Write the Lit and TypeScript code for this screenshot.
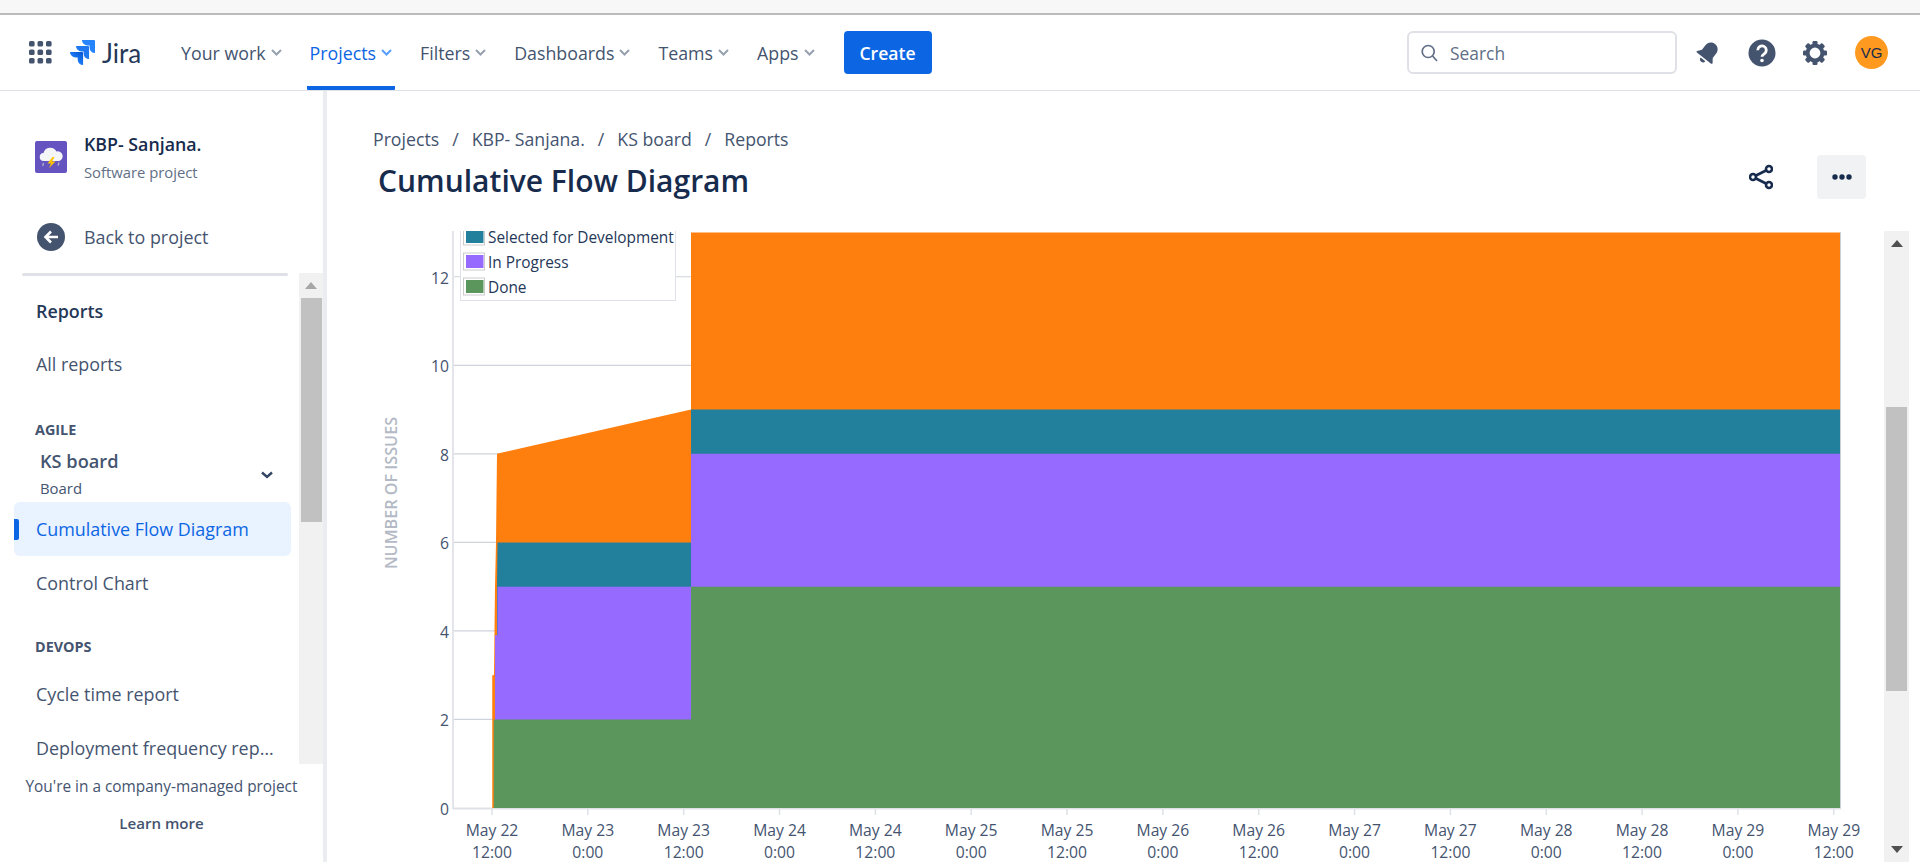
import { LitElement, html, css, svg } from 'lit';
import { customElement } from 'lit/decorators.js';

const NAV_ITEMS = ['Your work', 'Projects', 'Filters', 'Dashboards', 'Teams', 'Apps'];

const X_LABELS = [
  ['May 22', '12:00'], ['May 23', '0:00'], ['May 23', '12:00'], ['May 24', '0:00'],
  ['May 24', '12:00'], ['May 25', '0:00'], ['May 25', '12:00'], ['May 26', '0:00'],
  ['May 26', '12:00'], ['May 27', '0:00'], ['May 27', '12:00'], ['May 28', '0:00'],
  ['May 28', '12:00'], ['May 29', '0:00'], ['May 29', '12:00'],
];

// chart scale, in page pixels (the svg viewBox is page coordinates)
const Y0 = 808;
const UNIT = 44.27;
const y = (v: number) => Y0 - v * UNIT;
const tickX = (i: number) => 492 + 95.84 * i;

const pts = (list: number[][]) => list.map(([a, b]) => `${a},${y(b)}`).join(' ');

const chevron = html`<svg class="chev" width="11" height="7" viewBox="0 0 11 7"><path d="M1 1l4.5 4.5L10 1" fill="none" stroke="currentColor" stroke-width="2"/></svg>`;

@customElement('top-nav')
class TopNav extends LitElement {
  static styles = css`
    :host {
      display: flex;
      align-items: center;
      height: 75px;
      border-bottom: 1px solid #dfe1e6;
      padding-left: 29px;
      padding-right: 32px;
      color: #44546f;
    }
    .grid { display: block; margin-right: 18px; }
    .logo { display: block; margin-right: 7px; }
    .brand {
      font-family: 'Lato', sans-serif;
      font-size: 26px;
      color: #253858;
      width: 40px;
      margin-right: 36px;
    }
    .items { display: flex; height: 100%; gap: 22px; }
    .item {
      display: flex;
      align-items: center;
      gap: 5px;
      padding: 6px 3px 2px;
      font-size: 17.8px;
      font-weight: 500;
      box-sizing: border-box;
      border-bottom: 4px solid transparent;
      border-radius: 0 0 1px 1px;
    }
    .item .chev { color: #97a0af; }
    .item.active { color: #0c66e4; border-bottom-color: #0c66e4; }
    .item.active .chev { color: #579dff; }
    .create {
      margin-left: 26px;
      width: 88px;
      height: 43px;
      background: #0c66e4;
      color: #fff;
      border-radius: 4px;
      font-size: 17.6px;
      font-weight: 600;
      display: flex;
      align-items: center;
      justify-content: center;
    }
    .spacer { flex: 1; }
    .search {
      box-sizing: border-box;
      width: 270px;
      height: 43px;
      border: 2px solid #dfe1e6;
      border-radius: 6px;
      display: flex;
      align-items: center;
      gap: 12px;
      padding-left: 12px;
      color: #626f86;
      font-size: 17.4px;
    }
    .icons { display: flex; align-items: center; margin-left: 18px; }
    .icons svg { display: block; }
    .bell { margin-right: 27px; }
    .help { margin-right: 27px; }
    .gear { margin-right: 28px; }
    .avatar {
      width: 33px;
      height: 33px;
      border-radius: 50%;
      background: #ff991f;
      color: #172b4d;
      font-family: 'Liberation Sans', sans-serif;
      font-size: 15px;
      display: flex;
      align-items: center;
      justify-content: center;
    }
  `;

  render() {
    return html`
      <svg class="grid" width="23" height="23" viewBox="0 0 23 23" fill="#44546f">
        ${[0, 8.5, 17].map((b) => [0, 8.5, 17].map((a) => svg`<rect x=${a} y=${b} width="5.6" height="5.6" rx="1.6"/>`))}
      </svg>
      <svg class="logo" width="25" height="25" viewBox="0 0 24 24">
        <defs>
          <linearGradient id="jg" x1="1" y1="0" x2="0.35" y2="0.75">
            <stop offset="0" stop-color="#0052cc"/><stop offset="1" stop-color="#2684ff"/>
          </linearGradient>
        </defs>
        <path fill="#2684ff" d="M23.013 0H11.455a5.215 5.215 0 0 0 5.215 5.215h2.129v2.057A5.215 5.215 0 0 0 24 12.483V1.005A1.001 1.001 0 0 0 23.013 0Z"/>
        <path fill="#1f78f0" d="M17.294 5.757H5.736a5.215 5.215 0 0 0 5.215 5.214h2.129v2.058a5.218 5.218 0 0 0 5.215 5.214V6.758a1.001 1.001 0 0 0-1.001-1.001z"/>
        <path fill="url(#jg)" d="M11.571 11.513H0a5.218 5.218 0 0 0 5.232 5.215h2.13v2.057A5.215 5.215 0 0 0 12.575 24V12.518a1.005 1.005 0 0 0-1.005-1.005z"/>
      </svg>
      <div class="brand">Jira</div>
      <div class="items">
        ${NAV_ITEMS.map((n) => html`<div class="item ${n === 'Projects' ? 'active' : ''}">${n}${chevron}</div>`)}
      </div>
      <div class="create">Create</div>
      <div class="spacer"></div>
      <div class="search">
        <svg width="17" height="18" viewBox="0 0 17 18" fill="none" stroke="#626f86" stroke-width="1.7">
          <circle cx="7.2" cy="7.5" r="6"/><path d="M11.6 12l4.4 5"/>
        </svg>
        Search
      </div>
      <div class="icons">
        <svg class="bell" width="26" height="26" viewBox="0 0 24 24" fill="#44546f">
          <g transform="rotate(38 12 12)">
            <path d="M12 1.5c-4 0-6.3 3-6.3 6.6V13L3 16.6c-.4.6 0 1.4.7 1.4h16.6c.7 0 1.1-.8.7-1.4L18.3 13V8.1C18.300 4.500 16 1.500 12 1.500z"/>
            <path d="M9.300 19.500h5.400a2.700 2.700 0 0 1-5.400 0z"/>
          </g>
        </svg>
        <svg class="help" width="28" height="28" viewBox="0 0 28 28">
          <circle cx="14" cy="14" r="13.500" fill="#44546f"/>
          <path d="M9.700 11.200a4.300 4.300 0 1 1 6.600 3.600c-1.500 1-2.300 1.500-2.300 3" fill="none" stroke="#fff" stroke-width="2.800"/>
          <circle cx="14" cy="21.500" r="1.800" fill="#fff"/>
        </svg>
        <svg class="gear" width="24" height="24" viewBox="0 0 24 24" fill="#44546f">
          ${[0, 45, 90, 135, 180, 225, 270, 315].map((a) => svg`<rect x="9.500" y="0" width="5" height="5" rx="1.200" transform="rotate(${a} 12 12)"/>`)}
          <circle cx="12" cy="12" r="7.400" fill="none" stroke="#44546f" stroke-width="4"/>
        </svg>
        <div class="avatar">VG</div>
      </div>
    `;
  }
}

@customElement('side-nav')
class SideNav extends LitElement {
  static styles = css`
    :host {
      display: flex;
      flex-direction: column;
      flex: none;
      width: 323px;
      border-right: 4px solid #ebecf0;
      color: #44546f;
      font-size: 17.9px;
    }
    .project {
      display: flex;
      align-items: center;
      gap: 17px;
      height: 66px;
      margin-top: 33px;
      padding-left: 35px;
    }
    .project svg { display: block; flex: none; }
    .pname { font-size: 17.8px; font-weight: 600; color: #172b4d; line-height: 26px; margin-top: 1px; }
    .ptype { font-size: 14.8px; color: #626f86; line-height: 26px; margin-top: 2px; }
    .back {
      display: flex;
      align-items: center;
      gap: 19px;
      height: 48px;
      margin-top: 23px;
      margin-bottom: 1px;
      padding-left: 37px;
    }
    .back svg { display: block; }
    .sep {
      height: 3px;
      background: #dfe1e6;
      margin: 11px 35px 0 22px;
      border-radius: 2px;
    }
    .scroll {
      display: flex;
      height: 491px;
      margin-top: -3px;
      overflow: hidden;
    }
    .list { flex: 1; min-width: 0; padding-top: 14px; }
    .heading {
      height: 48px;
      display: flex;
      align-items: center;
      padding-left: 36px;
      font-weight: 600;
      color: #253858;
    }
    .row {
      position: relative;
      height: 54px;
      margin: 0 8px 0 14px;
      padding: 0 17px 0 22px;
      display: flex;
      align-items: center;
      border-radius: 6px;
      white-space: nowrap;
      overflow: hidden;
    }
    .row span { overflow: hidden; text-overflow: ellipsis; }
    .row.first { margin-top: 2px; }
    .row.active { background: #e9f2ff; color: #0c66e4; margin-top: 0; }
    .row.active::before {
      content: '';
      position: absolute;
      left: 0;
      top: 17px;
      width: 5px;
      height: 21px;
      background: #0c66e4;
      border-radius: 0 2px 2px 0;
    }
    .group {
      height: 22px;
      display: flex;
      align-items: center;
      padding-left: 35px;
      font-size: 14.4px;
      font-weight: 700;
      color: #44546f;
    }
    .group.agile { margin-top: 27px; }
    .group.devops { margin-top: 25px; margin-bottom: 10px; }
    .board {
      height: 56px;
      margin-top: 6px;
      padding: 0 26px 0 40px;
      display: flex;
      align-items: center;
      justify-content: space-between;
      box-sizing: border-box;
    }
    .board svg { margin-top: 2px; }
    .bname { font-weight: 600; font-size: 18.2px; line-height: 27px; margin-top: 1px; }
    .btype { font-size: 14.9px; line-height: 27px; }
    .bar {
      flex: none;
      width: 24px;
      background: #f1f1f1;
      display: flex;
      flex-direction: column;
      align-items: center;
    }
    .arrow { height: 25px; display: flex; align-items: center; justify-content: center; }
    .thumb { width: 21px; height: 224px; background: #c1c1c1; }
    .foot { text-align: center; padding-top: 12px; }
    .foot .note { font-size: 15.4px; line-height: 22px; color: #44546f; white-space: nowrap; }
    .foot .more { font-size: 15.1px; font-weight: 600; line-height: 22px; margin-top: 14px; color: #44546f; }
  `;

  render() {
    return html`
      <div class="project">
        <svg width="32" height="32" viewBox="0 0 32 32">
          <rect width="32" height="32" rx="2" fill="#6554c0"/>
          <path d="M9 20a4 4 0 0 1-.5-8A7 7 0 0 1 21.500 10.500 4.800 4.800 0 0 1 24 20z" fill="#f4f5f7"/>
          <path d="M17.500 16l-5 6.500h3.500l-2 4.500 6.500-6.500h-3.500l2.500-4.500z" fill="#ffc400"/>
          <path d="M8.500 22l-.8 3M24 21.500l-.8 3" stroke="#b3bac5" stroke-width="1.200"/>
        </svg>
        <div>
          <div class="pname">KBP- Sanjana.</div>
          <div class="ptype">Software project</div>
        </div>
      </div>
      <div class="back">
        <svg width="28" height="28" viewBox="0 0 28 28">
          <circle cx="14" cy="14" r="14" fill="#44546f"/>
          <path d="M21 14H9M14 8.500L8.500 14l5.500 5.500" fill="none" stroke="#fff" stroke-width="2.600"/>
        </svg>
        Back to project
      </div>
      <div class="sep"></div>
      <div class="scroll">
        <div class="list">
          <div class="heading">Reports</div>
          <div class="row first"><span>All reports</span></div>
          <div class="group agile">AGILE</div>
          <div class="board">
            <div>
              <div class="bname">KS board</div>
              <div class="btype">Board</div>
            </div>
            <svg width="12" height="8" viewBox="0 0 12 8"><path d="M1 1.500l5 4.500 5-4.500" fill="none" stroke="#344563" stroke-width="2.400"/></svg>
          </div>
          <div class="row active"><span>Cumulative Flow Diagram</span></div>
          <div class="row"><span>Control Chart</span></div>
          <div class="group devops">DEVOPS</div>
          <div class="row"><span>Cycle time report</span></div>
          <div class="row"><span>Deployment frequency report</span></div>
        </div>
        <div class="bar">
          <div class="arrow"><svg width="12" height="7" viewBox="0 0 12 7"><path d="M6 0l6 7H0z" fill="#a6a6a6"/></svg></div>
          <div class="thumb"></div>
        </div>
      </div>
      <div class="foot">
        <div class="note">You're in a company-managed project</div>
        <div class="more">Learn more</div>
      </div>
    `;
  }
}

@customElement('flow-chart')
class FlowChart extends LitElement {
  static styles = css`
    :host { display: block; flex: none; width: 1557px; height: 631px; overflow: hidden; }
    svg { display: block; }
    .lab { font-size: 15.7px; fill: #44546f; }
    .ylab { font-size: 15.7px; fill: #44546f; }
    .title { font-size: 16.2px; font-weight: 600; fill: #b3bac5; }
    .leg { font-size: 15.4px; fill: #253858; }
  `;

  render() {
    const gridV = [2, 4, 6, 8, 10, 12];
    const legend = [
      { name: 'Selected for Development', fill: '#23809c', top: 226, h: 18 },
      { name: 'In Progress', fill: '#9669ff', top: 253, h: 16 },
      { name: 'Done', fill: '#5b965d', top: 278, h: 16 },
    ];
    return html`
      <svg width="1557" height="631" viewBox="327 231 1557 631">
        <text class="title" text-anchor="middle" transform="translate(397 493) rotate(-90)">NUMBER OF ISSUES</text>

        ${gridV.map((v) => svg`<line x1="453" x2="700" y1=${y(v)} y2=${y(v)} stroke="#cfd4dc" stroke-width="1.200"/>`)}
        <line x1="453" x2="453" y1="231" y2="809" stroke="#e4e5ea" stroke-width="2"/>
        <line x1="453" x2="1841" y1="808.500" y2="808.500" stroke="#dfe1e6" stroke-width="2"/>
        ${X_LABELS.map((l, i) => svg`
          <line x1=${tickX(i)} x2=${tickX(i)} y1="808" y2="815" stroke="#dfe1e6" stroke-width="1.500"/>
          <text class="lab" text-anchor="middle" x=${tickX(i)} y="836">${l[0]}</text>
          <text class="lab" text-anchor="middle" x=${tickX(i)} y="858">${l[1]}</text>
        `)}
        ${[0, ...gridV].map((v) => svg`<text class="ylab" text-anchor="end" x="449" y=${y(v) + 7}>${v}</text>`)}

        <line x1="1840.500" x2="1840.500" y1="232" y2="808" stroke="#ccd0d8"/>
        <polygon fill="#ff7f0e" points="${pts([[493, 0], [493, 3], [494, 3], [495, 5], [496, 6], [497, 8], [691, 9], [691, 13], [1840, 13], [1840, 0]])}"/>
        <polygon fill="#23809c" points="${pts([[497, 5], [497.500, 6], [691, 6], [691, 9], [1840, 9], [1840, 0], [497, 0]])}"/>
        <polygon fill="#9669ff" points="${pts([[495, 2], [495, 3.900], [497.500, 3.900], [497.500, 5], [691, 5], [691, 8], [1840, 8], [1840, 0], [495, 0]])}"/>
        <polygon fill="#5b965d" points="${pts([[493, 0], [493, 2], [691, 2], [691, 5], [1840, 5], [1840, 0]])}"/>
        <line x1="493" x2="493" y1=${y(3)} y2=${y(0)} stroke="#ff7f0e" stroke-width="1.500"/>

        <rect x="460.500" y="200" width="215" height="100.500" fill="#fff" stroke="#dfe1e6"/>
        ${legend.map((e, i) => svg`
          <rect x="463.500" y=${e.top} width="21" height=${e.h + 1} fill="#fff" stroke="#ccc"/>
          <rect x="466" y=${e.top + 2} width="17.500" height=${e.h - 3} fill=${e.fill}/>
          <text class="leg" x="488" y=${243 + i * 25}>${e.name}</text>
        `)}
      </svg>
    `;
  }
}

@customElement('app-root')
export class AppRoot extends LitElement {
  static styles = css`
    :host {
      display: flex;
      flex-direction: column;
      height: 862px;
      overflow: hidden;
      background: #fff;
      font-family: 'Open Sans', sans-serif;
      color: #172b4d;
    }
    .browser { flex: none; height: 13px; background: #f7f7f7; border-bottom: 2px solid #bbb; }
    .body { flex: 1; display: flex; min-height: 0; }
    .main { flex: 1; min-width: 0; padding-top: 33px; }
    .crumbs {
      display: flex;
      align-items: center;
      height: 30px;
      padding-left: 46px;
      gap: 13px;
      font-size: 17.7px;
      color: #44546f;
    }
    .head {
      display: flex;
      align-items: center;
      height: 44px;
      margin-top: 1px;
      padding-left: 51px;
      padding-right: 54px;
    }
    h1 {
      flex: 1;
      margin: 6px 0 0;
      font-size: 30px;
      font-weight: 600;
      color: #172b4d;
    }
    .share { display: block; margin-right: 44px; }
    .more {
      width: 49px;
      height: 44px;
      background: #f1f2f4;
      border-radius: 4px;
      display: flex;
      align-items: center;
      justify-content: center;
    }
    .chart-wrap { display: flex; margin-top: 32px; }
    .vbar {
      flex: none;
      width: 25px;
      height: 631px;
      background: #f1f1f1;
      display: flex;
      flex-direction: column;
      align-items: center;
    }
    .varrow { height: 25px; flex: none; display: flex; align-items: center; justify-content: center; }
    .vspace { height: 151px; flex: none; }
    .vthumb { width: 21px; height: 284px; background: #c1c1c1; flex: none; }
    .vfill { flex: 1; }
  `;

  render() {
    return html`
      <div class="browser"></div>
      <top-nav></top-nav>
      <div class="body">
        <side-nav></side-nav>
        <div class="main">
          <div class="crumbs">
            <span>Projects</span><span>/</span><span>KBP- Sanjana.</span><span>/</span><span>KS board</span><span>/</span><span>Reports</span>
          </div>
          <div class="head">
            <h1>Cumulative Flow Diagram</h1>
            <svg class="share" width="24" height="26" viewBox="0 0 24 26" fill="none" stroke="#172b4d" stroke-width="2.600">
              <circle cx="20" cy="5" r="3"/><circle cx="20" cy="21" r="3"/><circle cx="4" cy="13" r="3"/>
              <path d="M7 11.500l10-5M7 14.500l10 5"/>
            </svg>
            <div class="more">
              <svg width="20" height="6" viewBox="0 0 20 6" fill="#172b4d">
                <circle cx="3" cy="3" r="2.700"/><circle cx="10" cy="3" r="2.700"/><circle cx="17" cy="3" r="2.700"/>
              </svg>
            </div>
          </div>
          <div class="chart-wrap">
            <flow-chart></flow-chart>
            <div class="vbar">
              <div class="varrow"><svg width="12" height="7" viewBox="0 0 12 7"><path d="M6 0l6 7H0z" fill="#505050"/></svg></div>
              <div class="vspace"></div>
              <div class="vthumb"></div>
              <div class="vfill"></div>
              <div class="varrow"><svg width="12" height="7" viewBox="0 0 12 7"><path d="M6 7l6-7H0z" fill="#505050"/></svg></div>
            </div>
          </div>
        </div>
      </div>
    `;
  }
}
